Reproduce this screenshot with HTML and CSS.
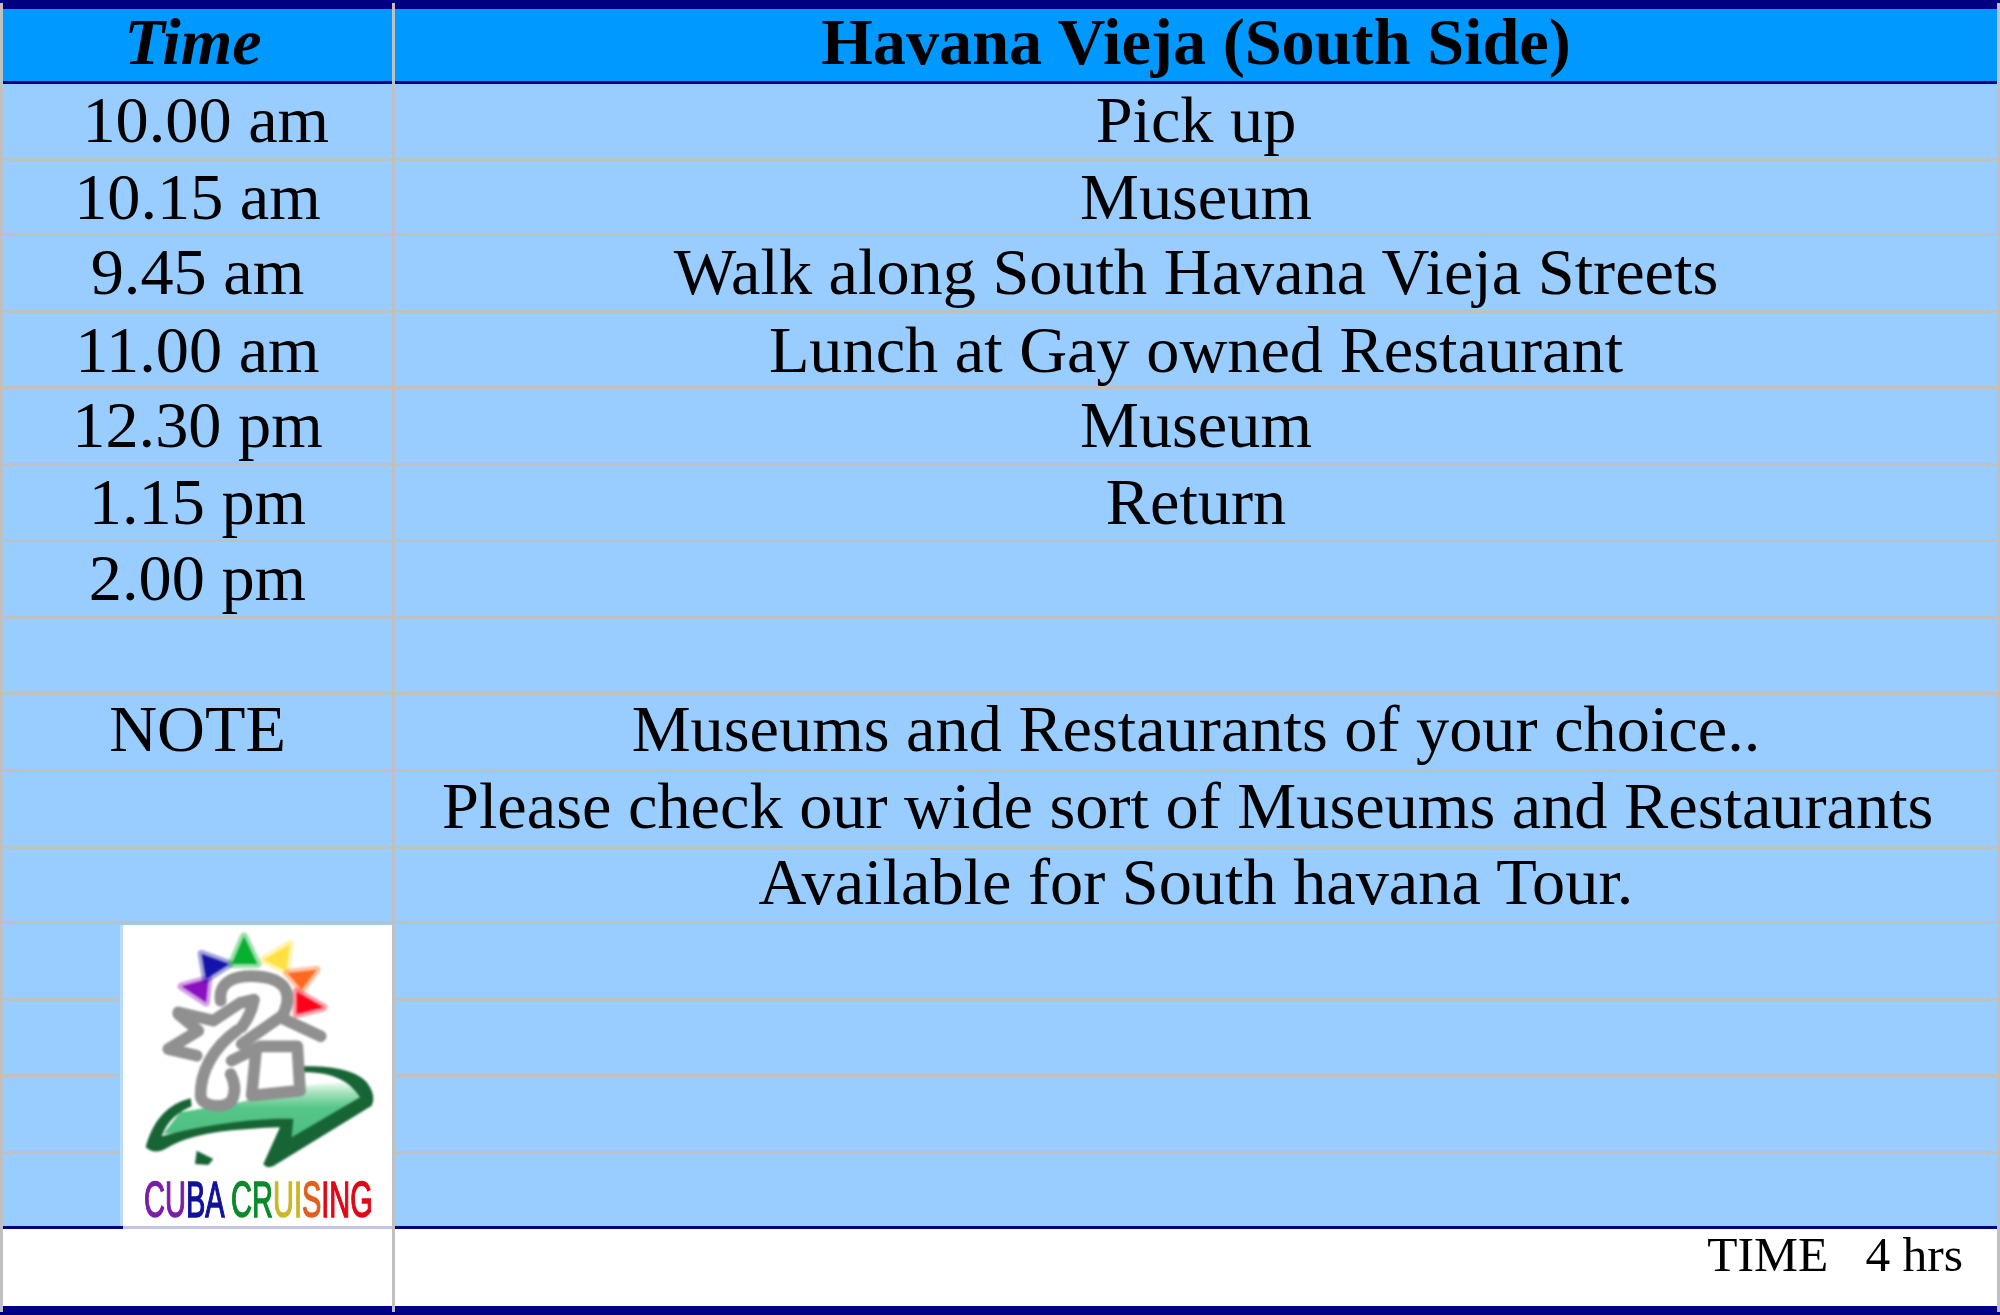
FILE: index.html
```html
<!DOCTYPE html>
<html lang="en">

<head>
    <meta charset="UTF-8">
    <title>Havana Vieja (South Side)</title>

    <link rel="stylesheet" href="styles.css">

</head>

<body>
    <div class="sheet">
        <table class="tour">
            <thead>
                <tr>
                    <th class="time-head">Time</th>
                    <th>Havana Vieja (South Side)</th>
                </tr>
            </thead>
            <tbody>
                <tr class="h77"><td>&nbsp;10.00 am</td><td>Pick up</td></tr>
                <tr class="h75 low"><td>10.15 am</td><td>Museum</td></tr>
                <tr class="h77"><td>9.45 am</td><td>Walk along South Havana Vieja Streets</td></tr>
                <tr class="h76 low"><td>11.00 am</td><td>Lunch at Gay owned Restaurant</td></tr>
                <tr class="h77"><td>12.30 pm</td><td>Museum</td></tr>
                <tr class="h76"><td>1.15 pm</td><td>Return</td></tr>
                <tr class="h77"><td>2.00 pm</td><td></td></tr>
                <tr class="h76"><td></td><td></td></tr>
                <tr class="h77 high"><td>NOTE</td><td>Museums and Restaurants of your choice..</td></tr>
                <tr class="h77 high"><td></td><td>Please check our wide sort of Museums and Restaurants&nbsp;</td></tr>
                <tr class="h75 high"><td></td><td>Available for South havana Tour.</td></tr>
                <tr class="h77"><td></td><td></td></tr>
                <tr class="h76"><td></td><td></td></tr>
                <tr class="h77"><td></td><td></td></tr>
                <tr class="h75 last"><td></td><td></td></tr>
            </tbody>
            <tfoot>
                <tr>
                    <td></td>
                    <td class="total">TIME &nbsp; 4 hrs</td>
                </tr>
            </tfoot>
        </table>

        <!-- logo sits on top of the last rows -->
        <div class="logo">
            <svg viewBox="69 78 807 735" width="269" height="245">
                <defs>
                    <linearGradient id="arrowFill" x1="0" y1="0" x2="0" y2="1">
                        <stop offset="0" stop-color="#ffffff" />
                        <stop offset="0.2" stop-color="#a5e2bd" />
                        <stop offset="0.45" stop-color="#55c688" />
                        <stop offset="1" stop-color="#4fbd80" />
                    </linearGradient>
                </defs>

                <g class="petals">
                    <polygon fill="#8a10c0" stroke="#8a10c0" points="245,262 325,240 318,310" />
                    <polygon fill="#1414aa" stroke="#1414aa" points="305,165 388,195 318,240" />
                    <polygon fill="#08b030" stroke="#08b030" points="432,112 472,195 395,195" />
                    <polygon fill="#ffe040" stroke="#ffe040" points="570,135 558,215 490,182" />
                    <polygon fill="#ff6a20" stroke="#ff6a20" points="650,212 605,272 562,222" />
                    <polygon fill="#ff0018" stroke="#ff0018" points="590,278 670,325 590,345" />
                </g>

                <path fill="url(#arrowFill)" d="M190 705 L240 640 L420 610 L610 560 L750 545 L790 595 L575 725 L575 665 L420 680 L280 700 Z" />
                <path fill="#176535" d="M272 598 C205 615 160 660 137 745 Q165 770 205 745 C280 700 400 690 540 685 L490 795 Q505 815 530 795 L815 620 Q830 590 800 550 C770 515 700 500 610 502 L610 520 C690 520 745 540 780 595 L575 715 L580 660 C480 655 300 680 185 712 C200 670 230 640 275 622 Z" />
                <path fill="#176535" d="M290 755 L340 780 L325 798 L285 795 Z" />

                <g class="figure">
                    <path d="M550 345 C580 280 555 238 470 232 C400 228 355 250 362 305" />
                    <path d="M235 340 L340 365 L420 312 L462 302 C455 340 440 365 425 385" />
                    <path d="M235 345 L295 395 L205 450 L290 470" />
                    <path d="M410 395 C340 445 300 520 302 590 C305 625 375 630 395 605 C410 575 402 545 392 525" />
                    <path d="M662 412 L540 355 L425 435" />
                    <path d="M395 485 L480 442 L592 442 L600 575 L455 590 L468 455" />
                </g>
            </svg>
            <div class="logo-name"><span class="c1">CU</span><span class="c2">BA</span> <span class="c3">CR</span><span class="c4">UI</span><span class="c5">S</span><span class="c6">ING</span></div>
        </div>
    </div>
</body>

</html>
```

FILE: styles.css
```css
body {
    margin: 0;
    font-family: "Liberation Serif", serif;
    background: #fff;
}

.sheet {
    position: relative;
    width: 2000px;
    height: 1315px;
    overflow: hidden;
}

.tour {
    width: 2000px;
    table-layout: fixed;
    border-collapse: separate;
    border-spacing: 0;
    border-top: 3px solid #000080;
    border-bottom: 3px solid #000080;
    color: #000;
    font-size: 66.3px;
}

.tour th,
.tour td {
    box-sizing: border-box;
    padding: 0;
    text-align: center;
    line-height: 60px;
    white-space: nowrap;
    border-right: 3px solid #c0c0c0;
}

.tour th:first-child,
.tour td:first-child {
    width: 395px;
    border-left: 3px solid #c0c0c0;
}

.tour th {
    height: 81px;
    padding-bottom: 3px;
    font-size: 66.3px;
    font-weight: bold;
    background: #0099ff;
    box-shadow: inset 0 6px 0 #000080, inset 0 -3px 0 #000080;
}

.tour .time-head {
    padding-right: 9px;
    font-style: italic;
}

.tour tbody td {
    padding-bottom: 2px;
    background: #99ccff;
    border-bottom: 3px solid #c0c0c0;
}

.tour tbody tr.low td {
    padding-bottom: 0;
}

.tour tbody tr.high td {
    padding-bottom: 6px;
}

.tour tbody tr.last td {
    border-bottom: 0;
    box-shadow: inset 0 -3px 0 #000080;
}

.h75 { height: 75px; }
.h76 { height: 76px; }
.h77 { height: 77px; }

.tour tfoot td {
    height: 83px;
    background: #fff;
    box-shadow: inset 0 -6px 0 #000080;
}

.tour .total {
    padding: 1px 34px 0 0;
    vertical-align: top;
    text-align: right;
    font-size: 49.5px;
    line-height: 50px;
}

/* logo */
.logo {
    position: absolute;
    left: 123px;
    top: 925px;
    width: 269px;
    height: 301px;
    background: #fff;
    box-shadow: -3px 0 0 #b8dcff, 0 3px 0 #c4c4e4;
}

.logo svg {
    display: block;
    filter: blur(0.8px);
}

.petals polygon {
    stroke-width: 24;
    stroke-opacity: 0.4;
    stroke-linejoin: round;
}

.figure path {
    fill: none;
    stroke: #909090;
    stroke-width: 35;
    stroke-linejoin: round;
    stroke-linecap: round;
}

.logo-name {
    width: 400px;
    margin: 3px 0 0 21px;
    font-family: "Liberation Sans", sans-serif;
    font-size: 50px;
    line-height: 54px;
    white-space: nowrap;
    transform: scaleX(0.58);
    transform-origin: left center;
    -webkit-text-stroke: 1.5px currentColor;
}

.c1 { color: #7a1ea8; }
.c2 { color: #10109c; }
.c3 { color: #0a8a2a; }
.c4 { color: #c8b828; }
.c5 { color: #e06020; }
.c6 { color: #e00818; }
```
